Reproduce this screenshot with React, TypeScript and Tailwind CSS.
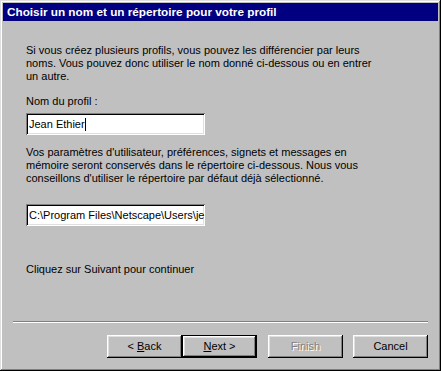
import React from 'react'

const font = { fontFamily: '"Liberation Sans", Arial, sans-serif' }

function Win95Button({
  children,
  isDefault,
  disabled,
  className = '',
}: {
  children: React.ReactNode
  isDefault?: boolean
  disabled?: boolean
  className?: string
}) {
  const bevel = isDefault
    ? 'border border-black shadow-[inset_-1px_-1px_#000,inset_1px_1px_#fff,inset_-2px_-2px_#808080,inset_2px_2px_#dfdfdf]'
    : 'shadow-[inset_-1px_-1px_#000,inset_1px_1px_#fff,inset_-2px_-2px_#808080,inset_2px_2px_#dfdfdf]'
  return (
    <button
      disabled={disabled}
      className={`w-[75px] h-[23px] bg-[#c0c0c0] text-[11px] leading-none flex items-center justify-center ${bevel} ${
        disabled ? 'text-[#808080] [text-shadow:1px_1px_0_#fff]' : 'text-black'
      } ${className}`}
    >
      {children}
    </button>
  )
}

function Field({ value, caret }: { value: string; caret?: boolean }) {
  return (
    <div className="w-[179px] h-[22px] bg-white flex items-center pl-[3px] text-[11px] text-black shadow-[inset_1px_1px_#808080,inset_-1px_-1px_#fff,inset_2px_2px_#000,inset_-2px_-2px_#dfdfdf] whitespace-nowrap">
      <span>{value}</span>
      {caret && <span className="inline-block w-px h-[13px] bg-black" />}
    </div>
  )
}

export default function App() {
  return (
    <div
      style={font}
      className="w-[441px] h-[371px] bg-[#c0c0c0] p-[3px] flex flex-col shadow-[inset_-1px_-1px_#000,inset_1px_1px_#dfdfdf,inset_-2px_-2px_#808080,inset_2px_2px_#fff]"
    >
      {/* Title bar */}
      <div className="h-[18px] bg-[#000080] text-white font-bold text-[11.75px] leading-[18px] pl-[4px]">
        Choisir un nom et un répertoire pour votre profil
      </div>

      {/* Body */}
      <div className="pl-[23px] text-[11px] leading-[13px] text-black">
        <p className="mt-[23px]">
          Si vous créez plusieurs profils, vous pouvez les différencier par leurs
          <br />
          noms. Vous pouvez donc utiliser le nom donné ci-dessous ou en entrer
          <br />
          un autre.
        </p>
        <p className="mt-[12px]">Nom du profil :</p>
        <div className="mt-[5px]">
          <Field value="Jean Ethier" caret />
        </div>
        <p className="mt-[11px]">
          Vos paramètres d'utilisateur, préférences, signets et messages en
          <br />
          mémoire seront conservés dans le répertoire ci-dessous. Nous vous
          <br />
          conseillons d'utiliser le répertoire par défaut déjà sélectionné.
        </p>
        <div className="mt-[19px]">
          <Field value="C:\Program Files\Netscape\Users\je" />
        </div>
        <p className="mt-[37px]">Cliquez sur Suivant pour continuer</p>
      </div>

      {/* Separator */}
      <div className="mt-[45px] mx-[10px] border-t border-[#808080] border-b border-b-white" />

      {/* Buttons */}
      <div className="mt-[12px] flex justify-end pr-[10px]">
        <Win95Button>
          &lt; <span className="underline ml-[3px]">B</span>ack
        </Win95Button>
        <Win95Button isDefault>
          <span className="underline">N</span>ext &gt;
        </Win95Button>
        <Win95Button disabled className="ml-[11px]">
          Finish
        </Win95Button>
        <Win95Button className="ml-[10px]">Cancel</Win95Button>
      </div>
    </div>
  )
}
